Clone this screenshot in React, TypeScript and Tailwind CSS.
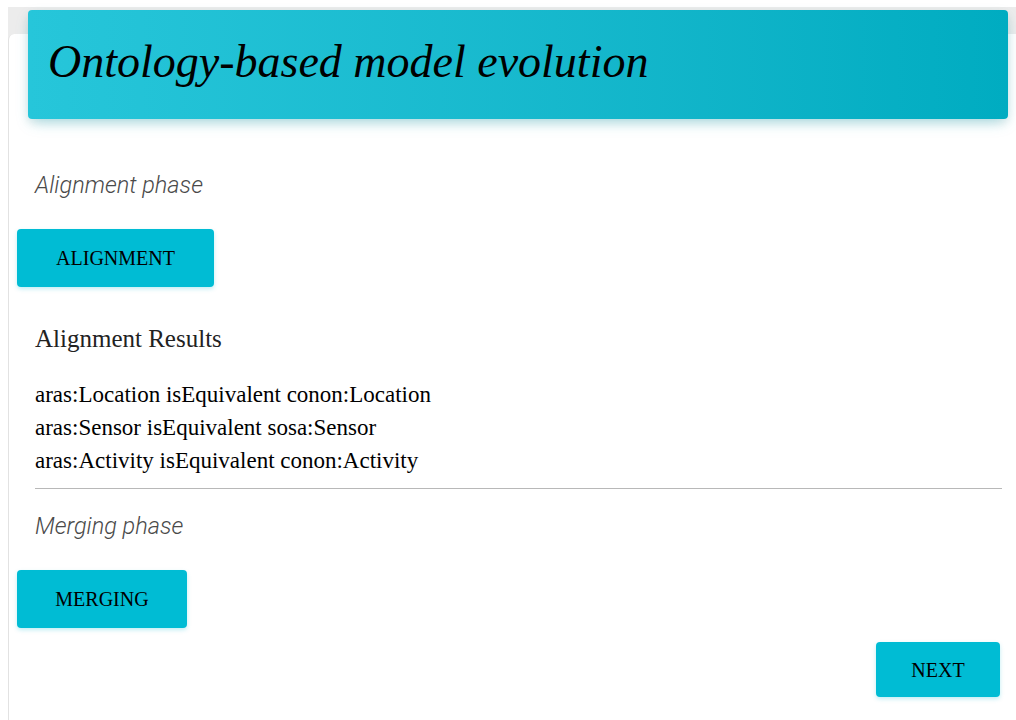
import type { ReactNode } from 'react';

const serif = "font-['Liberation_Serif','Times_New_Roman',serif]";
const roboto = "font-['Roboto',sans-serif]";

function ActionButton({ children, className = '' }: { children: ReactNode; className?: string }) {
  return (
    <button
      className={`${serif} flex items-center justify-center rounded-[4px] bg-[#00bcd4] text-black uppercase text-[20px] shadow-[0_2px_4px_rgba(0,188,212,0.25)] ${className}`}
    >
      {children}
    </button>
  );
}

const results = [
  'aras:Location isEquivalent conon:Location',
  'aras:Sensor isEquivalent sosa:Sensor',
  'aras:Activity isEquivalent conon:Activity',
];

export default function App() {
  return (
    <div className="min-h-screen bg-white pt-[7px] overflow-hidden">
      <div className="ml-[8px] bg-[#ececec] pt-[27px]">
        {/* Card */}
        <div className="flow-root relative bg-white rounded-tl-[6px] border-l border-[#e2e2e2] min-h-[686px] pb-6">
          {/* Floating header */}
          <div className="relative -mt-[24px] ml-[19px] mr-[8px] h-[109px] rounded-[4px] bg-gradient-to-r from-[#26c6da] to-[#00acc1] shadow-[0_6px_14px_-4px_rgba(0,172,193,0.35),0_4px_10px_rgba(0,0,0,0.08)] flex items-start pl-[20px] pt-[29px]">
            <h1 className={`${serif} italic text-[46px] leading-none text-black`}>
              Ontology-based model evolution
            </h1>
          </div>

          <div className="pl-[26px] pt-[55px]">
            <p className={`${roboto} italic font-light text-[23.5px] text-[#4a4a4a] leading-none`}>
              Alignment phase
            </p>
          </div>

          <div className="pl-[8px] pt-[31px]">
            <ActionButton className="w-[197px] h-[58px]">Alignment</ActionButton>
          </div>

          <div className="pl-[26px] pr-[14px] pt-[39px]">
            <h3 className={`${serif} text-[25px] text-[#222] leading-none`}>Alignment Results</h3>
            <div className={`${serif} text-[23px] text-black leading-[33px] pt-[27px]`}>
              {results.map((r) => (
                <div key={r}>{r}</div>
              ))}
            </div>
            <hr className="mt-[11px] border-t border-[#b8b8b8]" />
            <p className={`${roboto} pt-[26px] italic font-light text-[23.5px] text-[#4a4a4a] leading-none`}>
              Merging phase
            </p>
          </div>

          <div className="pl-[8px] pt-[32px]">
            <ActionButton className="w-[170px] h-[58px]">Merging</ActionButton>
          </div>

          <div className="flex justify-end pr-[16px] pt-[14px]">
            <ActionButton className="w-[124px] h-[55px]">Next</ActionButton>
          </div>
        </div>
      </div>
    </div>
  );
}
